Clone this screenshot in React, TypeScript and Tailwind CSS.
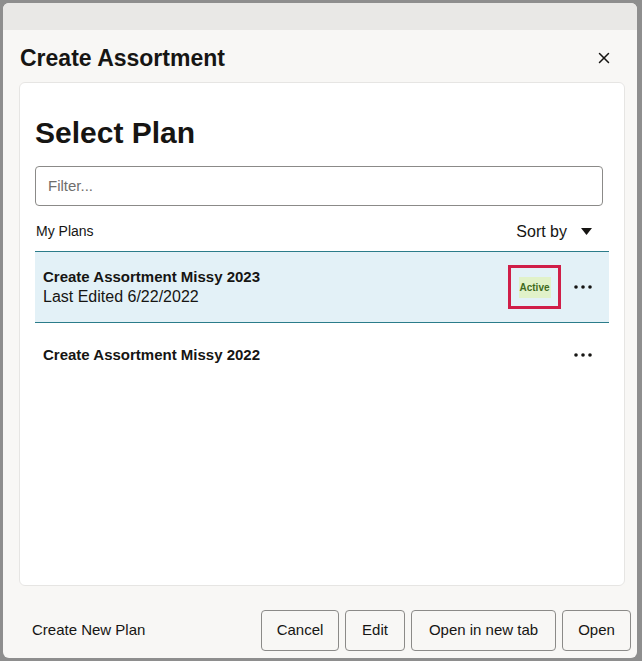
import { X } from "lucide-react";

function Dots() {
  return (
    <svg width="18" height="4" viewBox="0 0 18 4" className="shrink-0">
      <circle cx="2" cy="2" r="1.8" fill="#161513" />
      <circle cx="9" cy="2" r="1.8" fill="#161513" />
      <circle cx="16" cy="2" r="1.8" fill="#161513" />
    </svg>
  );
}

const plans = [
  { name: "Create Assortment Missy 2023", edited: "Last Edited 6/22/2022", active: true },
  { name: "Create Assortment Missy 2022", edited: "", active: false },
];

const buttons = [
  { label: "Cancel", w: "w-[78px]" },
  { label: "Edit", w: "w-[60px]" },
  { label: "Open in new tab", w: "w-[145px]" },
  { label: "Open", w: "w-[69px]" },
];

export default function App() {
  return (
    <div
      className="w-[642px] h-[661px] bg-[#8e8e8e] pt-[3px] pl-[3px] pr-[5px] pb-[3px] text-[#161513]"
      style={{ fontFamily: '"Liberation Sans", Arial, sans-serif' }}
    >
      <div className="h-full rounded-md bg-[#f8f7f5] flex flex-col overflow-hidden">
        <div className="h-[27px] bg-[#e9e8e6] shrink-0" />

        {/* header */}
        <div className="h-[52px] shrink-0 flex items-center justify-between pt-[4px] pl-[17px] pr-[22px]">
          <h2 className="text-[23px] font-bold leading-none">Create Assortment</h2>
          <button className="p-0.5">
            <X className="w-[18px] h-[18px]" strokeWidth={2} />
          </button>
        </div>

        {/* card */}
        <div className="h-[504px] shrink-0 ml-[16px] mr-[12px] bg-white border border-[#e6e5e3] rounded-md px-[15px]">
          <h1 className="pt-[32px] text-[30px] leading-[36px] font-bold">Select Plan</h1>

          <div className="mt-[15px] mr-[6px] h-[40px] border border-[#8b8a88] rounded-[4px] flex items-center px-3">
            <span className="text-[15px] text-[#6f6e6c]">Filter...</span>
          </div>

          <div className="h-[45px] flex items-center justify-between pt-[6px] pl-[1px] pr-[17px]">
            <span className="text-[14px]">My Plans</span>
            <div className="flex items-center gap-[14px]">
              <span className="text-[16px]">Sort by</span>
              <svg width="11" height="7" viewBox="0 0 11 7">
                <path d="M0 0 L11 0 L5.5 7 Z" fill="#161513" />
              </svg>
            </div>
          </div>

          <div className="border-t border-[#2b7c8a]">
            {plans.map((p) =>
              p.active ? (
                <div
                  key={p.name}
                  className="h-[71px] bg-[#e3f1f7] border-b border-[#2b7c8a] flex items-center pl-[8px] pr-[17px]"
                >
                  <div className="flex-1 text-[15px] leading-[20px]">
                    <div className="font-bold">{p.name}</div>
                    <div className="text-[16px]">{p.edited}</div>
                  </div>
                  <div className="w-[53px] h-[44px] border-[3px] border-[#d01e48] flex items-center justify-center mr-[13px]">
                    <span className="w-[32px] h-[21px] bg-[#e1f2c9] text-[#3e6a1e] text-[10px] font-bold flex items-center justify-center">
                      Active
                    </span>
                  </div>
                  <Dots />
                </div>
              ) : (
                <div key={p.name} className="h-[64px] flex items-center pl-[8px] pr-[17px]">
                  <div className="flex-1 text-[15px] font-bold">{p.name}</div>
                  <Dots />
                </div>
              )
            )}
          </div>
        </div>

        {/* footer */}
        <div className="flex-1 flex items-center justify-between pt-[17px] pl-[29px] pr-[6px]">
          <span className="text-[15px]">Create New Plan</span>
          <div className="flex gap-[6px]">
            {buttons.map((b) => (
              <button
                key={b.label}
                className={`${b.w} h-[41px] border border-[#8b8a88] rounded-[4px] bg-[#f8f7f5] text-[15px]`}
              >
                {b.label}
              </button>
            ))}
          </div>
        </div>
      </div>
    </div>
  );
}
